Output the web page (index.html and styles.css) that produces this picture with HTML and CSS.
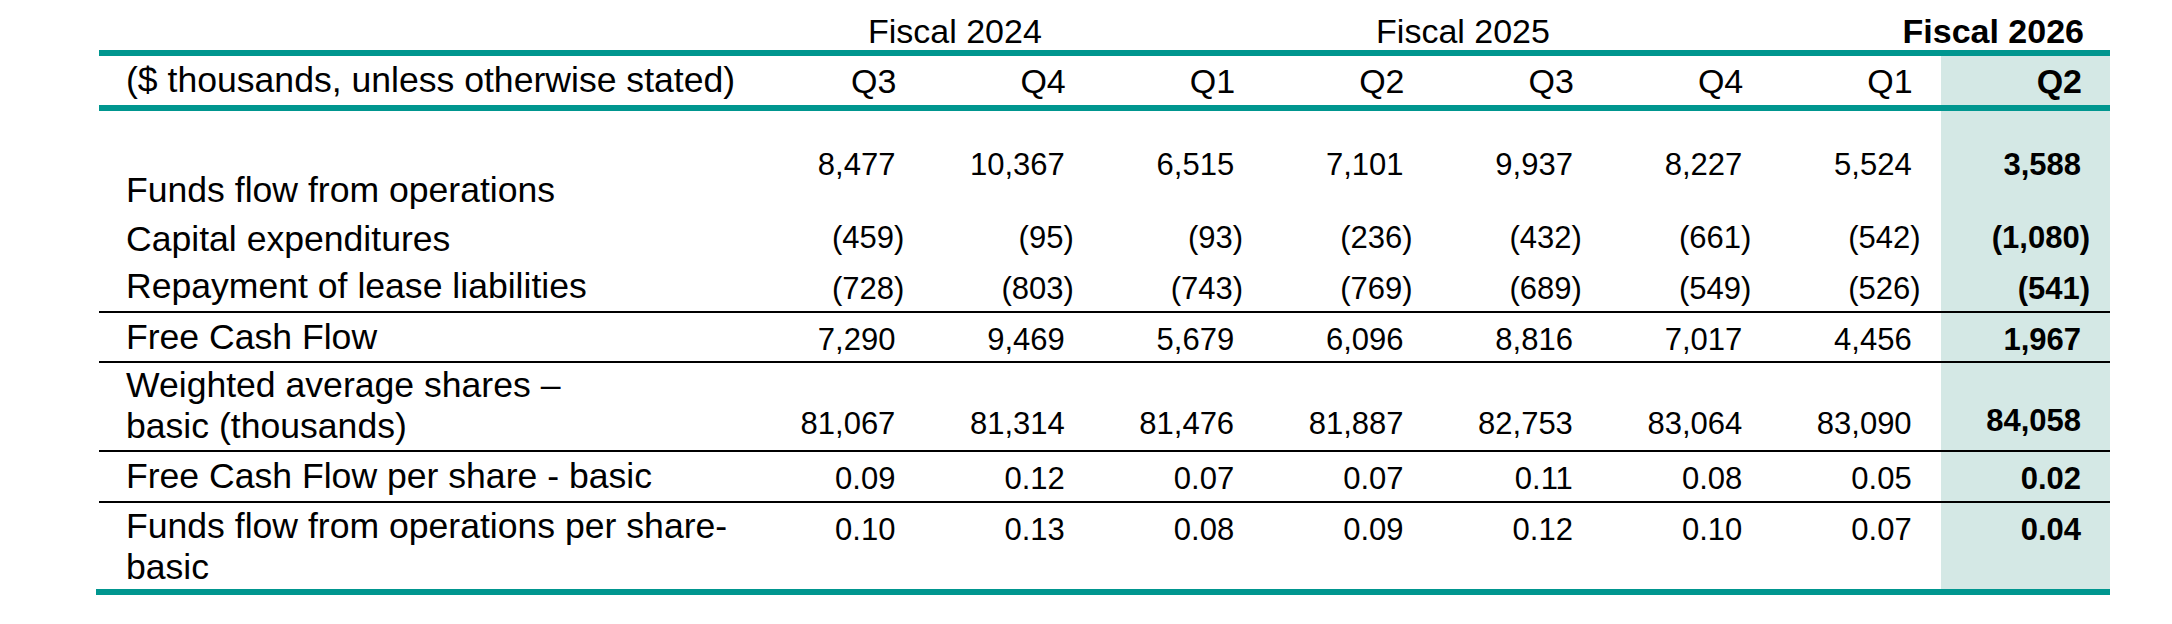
FILE: index.html
```html
<!DOCTYPE html>
<html lang="en">
<head>
<meta charset="utf-8">
<title>Free Cash Flow</title>
<link rel="stylesheet" href="styles.css">
</head>
<body>
<div class="fin">
  <div class="row fiscal">
    <div class="lab"></div>
    <div class="fy span2">Fiscal 2024</div>
    <div class="fy span4">Fiscal 2025</div>
    <div class="fy span2 cur">Fiscal 2026</div>
  </div>
  <div class="row head">
    <div class="lab">($ thousands, unless otherwise stated)</div>
    <div class="q">Q3</div>
    <div class="q">Q4</div>
    <div class="q">Q1</div>
    <div class="q">Q2</div>
    <div class="q">Q3</div>
    <div class="q">Q4</div>
    <div class="q">Q1</div>
    <div class="q hl">Q2</div>
  </div>
  <div class="row r-a">
    <div class="lab">Funds flow from operations</div>
    <div class="n">8,477</div>
    <div class="n">10,367</div>
    <div class="n">6,515</div>
    <div class="n">7,101</div>
    <div class="n">9,937</div>
    <div class="n">8,227</div>
    <div class="n">5,524</div>
    <div class="n hl">3,588</div>
  </div>
  <div class="row r-b">
    <div class="lab">Capital expenditures</div>
    <div class="n neg">(459)</div>
    <div class="n neg">(95)</div>
    <div class="n neg">(93)</div>
    <div class="n neg">(236)</div>
    <div class="n neg">(432)</div>
    <div class="n neg">(661)</div>
    <div class="n neg">(542)</div>
    <div class="n neg hl">(1,080)</div>
  </div>
  <div class="row r-c rule">
    <div class="lab">Repayment of lease liabilities</div>
    <div class="n neg">(728)</div>
    <div class="n neg">(803)</div>
    <div class="n neg">(743)</div>
    <div class="n neg">(769)</div>
    <div class="n neg">(689)</div>
    <div class="n neg">(549)</div>
    <div class="n neg">(526)</div>
    <div class="n neg hl">(541)</div>
  </div>
  <div class="row r-d rule">
    <div class="lab">Free Cash Flow</div>
    <div class="n">7,290</div>
    <div class="n">9,469</div>
    <div class="n">5,679</div>
    <div class="n">6,096</div>
    <div class="n">8,816</div>
    <div class="n">7,017</div>
    <div class="n">4,456</div>
    <div class="n hl">1,967</div>
  </div>
  <div class="row r-e rule">
    <div class="lab">Weighted average shares –<br>basic (thousands)</div>
    <div class="n">81,067</div>
    <div class="n">81,314</div>
    <div class="n">81,476</div>
    <div class="n">81,887</div>
    <div class="n">82,753</div>
    <div class="n">83,064</div>
    <div class="n">83,090</div>
    <div class="n hl">84,058</div>
  </div>
  <div class="row r-f rule">
    <div class="lab">Free Cash Flow per share - basic</div>
    <div class="n">0.09</div>
    <div class="n">0.12</div>
    <div class="n">0.07</div>
    <div class="n">0.07</div>
    <div class="n">0.11</div>
    <div class="n">0.08</div>
    <div class="n">0.05</div>
    <div class="n hl">0.02</div>
  </div>
  <div class="row r-g last">
    <div class="lab">Funds flow from operations per share-<br>basic</div>
    <div class="n">0.10</div>
    <div class="n">0.13</div>
    <div class="n">0.08</div>
    <div class="n">0.09</div>
    <div class="n">0.12</div>
    <div class="n">0.10</div>
    <div class="n">0.07</div>
    <div class="n hl">0.04</div>
  </div>
</div>
</body>
</html>
```

FILE: styles.css
```css
html, body {
  margin: 0;
  padding: 0;
  background: #ffffff;
}

body {
  font-family: "Liberation Sans", Arial, sans-serif;
  color: #000000;
}

.fin {
  margin-left: 99px;
  width: 2011px;
}

.row {
  display: grid;
  grid-template-columns: 656px repeat(8, 1fr);
  box-sizing: content-box;
}

.row > div {
  white-space: nowrap;
}

/* fiscal year header */
.fiscal {
  height: 50px;
  border-bottom: 6px solid #00968f;
}

.fy {
  font-size: 34px;
  line-height: 40px;
  padding-top: 11px;
  text-align: center;
  padding-left: 61px;
}

.span2 { grid-column: span 2; }
.span4 { grid-column: span 4; }

.fy.cur {
  font-weight: 700;
  text-align: right;
  padding-left: 0;
  padding-right: 26px;
}

/* quarter header */
.head {
  height: 49px;
  border-bottom: 6px solid #00968f;
}

.head > div {
  font-size: 34px;
  line-height: 40px;
  padding-top: 5px;
}

.head .lab {
  font-size: 35.6px;
  line-height: 41px;
  padding-top: 4px;
}

.head .q {
  text-align: right;
  padding-right: 28px;
}

/* body cells */
.lab {
  font-size: 35.6px;
  line-height: 41px;
  padding-left: 27px;
  padding-top: 4px;
}

.n {
  font-size: 31px;
  line-height: 36px;
  text-align: right;
  padding-top: 9px;
  padding-right: 29px;
}

.n.neg {
  padding-right: 20px;
}

.hl {
  background: #d4e8e5;
  font-weight: 700;
}

/* row heights */
.r-a { height: 103px; }
.r-a .lab { padding-top: 59px; }
.r-a .n { padding-top: 36px; }

.r-b { height: 48px; }
.r-b .lab { padding-top: 5px; }
.r-b .n { padding-top: 5.5px; }

.r-c { height: 49px; }

.r-d { height: 48px; }

.r-e { height: 87px; }
.r-e .lab { padding-top: 2px; }
.r-e .n { padding-top: 43px; }
.r-e .n.hl { padding-top: 40px; }

.r-f { height: 49px; }

.r-g { height: 86px; }
.r-g .lab { padding-top: 3px; }

.rule {
  border-bottom: 2px solid #000000;
}

.last {
  margin-left: -3px;
  padding-left: 3px;
  border-bottom: 6px solid #00968f;
}
```
